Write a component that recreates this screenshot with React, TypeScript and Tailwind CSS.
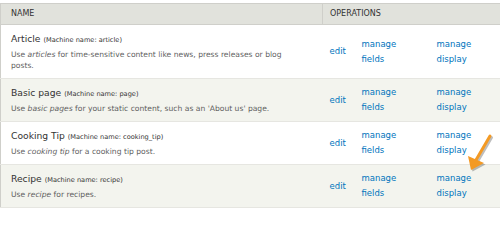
const types = [
  { name: 'Article', machine: 'article', em: 'articles', rest: ' for time-sensitive content like news, press releases or blog posts.' },
  { name: 'Basic page', machine: 'page', em: 'basic pages', rest: " for your static content, such as an 'About us' page." },
  { name: 'Cooking Tip', machine: 'cooking_tip', em: 'cooking tip', rest: ' for a cooking tip post.' },
  { name: 'Recipe', machine: 'recipe', em: 'recipe', rest: ' for recipes.' },
];

function Arrow() {
  return (
    <svg className="absolute left-[462px] top-[132px]" width="34" height="44" viewBox="0 0 34 44">
      <g opacity="0.25" transform="translate(1.5 1.5)">
        <line x1="28" y1="4" x2="14" y2="28" stroke="#000" strokeWidth="3" strokeLinecap="round" />
        <polygon points="6,24 22,31 9,38" fill="#000" />
      </g>
      <line x1="28" y1="4" x2="14" y2="28" stroke="#f39a25" strokeWidth="3" strokeLinecap="round" />
      <polygon points="6,24 22,31 9,38" fill="#f39a25" />
    </svg>
  );
}

export default function App() {
  return (
    <div className="relative w-[500px] h-[214px] overflow-hidden bg-white pt-[3px] font-['DejaVu_Sans',sans-serif] text-[#333]">
      <table className="w-[520px] border-collapse border border-[#cfcfca] table-fixed">
        <colgroup>
          <col className="w-[322px]" />
          <col className="w-[33px]" />
          <col className="w-[74px]" />
          <col />
        </colgroup>
        <thead>
          <tr className="h-[21px] bg-[#e1e2dc] border-b border-[#cfcfca]">
            <th className="text-left font-normal text-[8px] pl-[10px] align-middle">NAME</th>
            <th colSpan={3} className="text-left font-normal text-[8px] pl-[7px] border-l border-[#cfcfca] align-middle">OPERATIONS</th>
          </tr>
        </thead>
        <tbody>
          {types.map((t, i) => (
            <tr key={t.machine} className={i % 2 ? 'bg-[#f3f4ee] border-b border-[#e6e6e1]' : 'bg-white border-b border-[#e6e6e1]'}>
              <td className="pl-[10px] pr-[20px] pt-[8px] pb-[7px] align-top">
                <div className="h-[12px] text-[9.2px] leading-[12px] whitespace-nowrap">
                  {t.name} <span className="text-[6.6px] leading-[12px]">(Machine name: {t.machine})</span>
                </div>
                <div className="mt-[4px] w-[288px] text-[7.6px] leading-[11px] text-[#5f5f5f]">
                  Use <em>{t.em}</em>{t.rest}
                </div>
              </td>
              <td className="pl-[7px] align-middle text-[8.5px] leading-[15px] text-[#0074bd]">
                <a>edit</a>
              </td>
              <td className="pl-[6px] align-middle text-[8.5px] leading-[15px] text-[#0074bd]">
                <a className="block">manage</a>
                <a className="block">fields</a>
              </td>
              <td className="pl-[7px] align-middle text-[8.5px] leading-[15px] text-[#0074bd]">
                <a className="block">manage</a>
                <a className="block">display</a>
              </td>
            </tr>
          ))}
        </tbody>
      </table>
      <Arrow />
    </div>
  );
}
